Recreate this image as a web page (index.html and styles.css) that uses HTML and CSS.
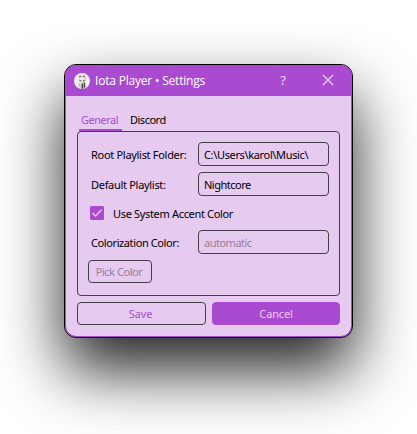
FILE: index.html
```html
<!DOCTYPE html>
<html lang="en">
<head>
<meta charset="utf-8">
<title>Iota Player • Settings</title>
<link rel="stylesheet" href="styles.css">
</head>
<body>
<main class="window">
  <header class="titlebar">
    <svg class="avatar" viewBox="0 0 16 16" aria-hidden="true">
      <circle cx="8" cy="8" r="8" fill="#f4f0ef"/>
      <path d="M4.500 3.500 6 1.800h4.500L12 4v4l-1 2H6L4.500 8z" fill="#d9d4cf"/>
      <path d="M5 3h2v1H5zM9 3h2v1H9zM5.500 7h1.500v1H5.500zM9 7h1.500v1H9z" fill="#716a69"/>
      <path d="M6 5h4v1.500H6z" fill="#fff"/>
      <path d="M7.500 10.500h1.500l.5 5-2 .4zM9.500 9l1.500 1 .5 4-1.500 1z" fill="#4b4647"/>
      <path d="M4 9.500 6.500 11l.5 4-2.500-1.500z" fill="#c9c4be"/>
    </svg>
    <h1 class="title">Iota Player • Settings</h1>
    <span class="help">?</span>
    <svg class="close" viewBox="0 0 12 12" aria-hidden="true"><path d="M1 1l10 10M11 1L1 11" stroke="#f0dff7" stroke-width="1.100" fill="none"/></svg>
  </header>
  <section class="content">
    <nav class="tabs">
      <span class="tab tab-active">General</span>
      <span class="tab">Discord</span>
    </nav>
    <div class="panel">
      <div class="row"><span class="label">Root Playlist Folder:</span><div class="field field-path">C:\Users\karol\Music\</div></div>
      <div class="row"><span class="label">Default Playlist:</span><div class="field">Nightcore</div></div>
      <div class="check-row">
        <svg class="checkbox" viewBox="0 0 14 14" aria-hidden="true"><rect width="14" height="14" rx="1.500" fill="#a94ad0"/><path d="M2.500 7l3 3 6-6.200" fill="none" stroke="#e6caf0" stroke-width="1.300"/></svg>
        <span class="check-label">Use System Accent Color</span>
      </div>
      <div class="row"><span class="label label-color">Colorization Color:</span><div class="field field-disabled">automatic</div></div>
      <div class="pick">Pick Color</div>
    </div>
    <footer class="actions">
      <div class="button save">Save</div>
      <div class="button cancel">Cancel</div>
    </footer>
  </section>
</main>
</body>
</html>
```
FILE: styles.css
```css
* { box-sizing: border-box; }
body {
  margin: 0;
  padding: 64px;
  height: 434px;
  overflow: hidden;
  background: #fff;
  font: 11px/14px "Noto Sans", sans-serif;
  color: #000;
  white-space: nowrap;
}
.window {
  width: 289px;
  height: 274px;
  border: 1px solid #000;
  border-radius: 12px;
  background: #e6caf0;
  box-shadow: inset 0 0 0 1px #a94ad0, 0 32px 64px rgba(0, 0, 0, .87);
}
.titlebar {
  display: flex;
  align-items: center;
  height: 31px;
  padding-left: 9px;
  border-radius: 11px 11px 0 0;
  background: #a94ad0;
  color: #fff;
}
.avatar { width: 16px; height: 16px; }
.title {
  width: 174px;
  margin: 1px 0 0 5px;
  font-family: "Open Sans", sans-serif;
  font-size: 12px;
  font-weight: 400;
  line-height: 16px;
  letter-spacing: -.2px;
}
.help { width: 8px; margin: -2px 0 0 10px; font-size: 13px; color: #f0dff7; text-align: center; }
.close { width: 12px; height: 12px; margin: -1px 0 0 35px; }
.content { padding: 12px 12px 0; }
.tabs { display: flex; padding-left: 2px; height: 23px; }
.tab { height: 23px; padding: 5px 0 0 3px; width: 49px; letter-spacing: -.5px; }
.tab-active { width: 43px; margin-right: 5px; padding-left: 2px; color: #a94ad0; border-bottom: 2px solid #a94ad0; }
.panel {
  display: flex;
  flex-direction: column;
  height: 165px;
  padding: 10px;
  border: 1px solid #443e48;
  border-radius: 4px;
}
.row { display: flex; height: 24px; margin-bottom: 6px; }
.label { width: 107px; margin-left: 3px; padding-top: 6px; letter-spacing: -.3px; }
.label-color { letter-spacing: -.4px; }
.field {
  width: 131px;
  height: 24px;
  padding: 5px 0 0 5px;
  border: 1px solid #443e48;
  border-radius: 4px;
  letter-spacing: -.5px;
}
.field-path { letter-spacing: -.35px; }
.field-disabled, .pick { color: #94809d; }
.check-row { display: flex; height: 28px; padding: 4px 0 0 2px; }
.checkbox { width: 14px; height: 14px; }
.check-label { margin: 1px 0 0 9px; letter-spacing: -.33px; }
.pick {
  width: 64px;
  height: 23px;
  padding: 4px 2px 0 0;
  border: 1px solid #443e48;
  border-radius: 4px;
  text-align: center;
  letter-spacing: -.45px;
}
.actions { display: flex; gap: 6px; margin-top: 6px; }
.button { height: 23px; padding-top: 4px; border: 1px solid #443e48; border-radius: 4px; text-align: center; letter-spacing: -.15px; }
.save { width: 129px; padding-right: 2px; color: #a94ad0; }
.cancel { width: 128px; border-color: #a94ad0; background: #a94ad0; color: #e6caf0; }
```
